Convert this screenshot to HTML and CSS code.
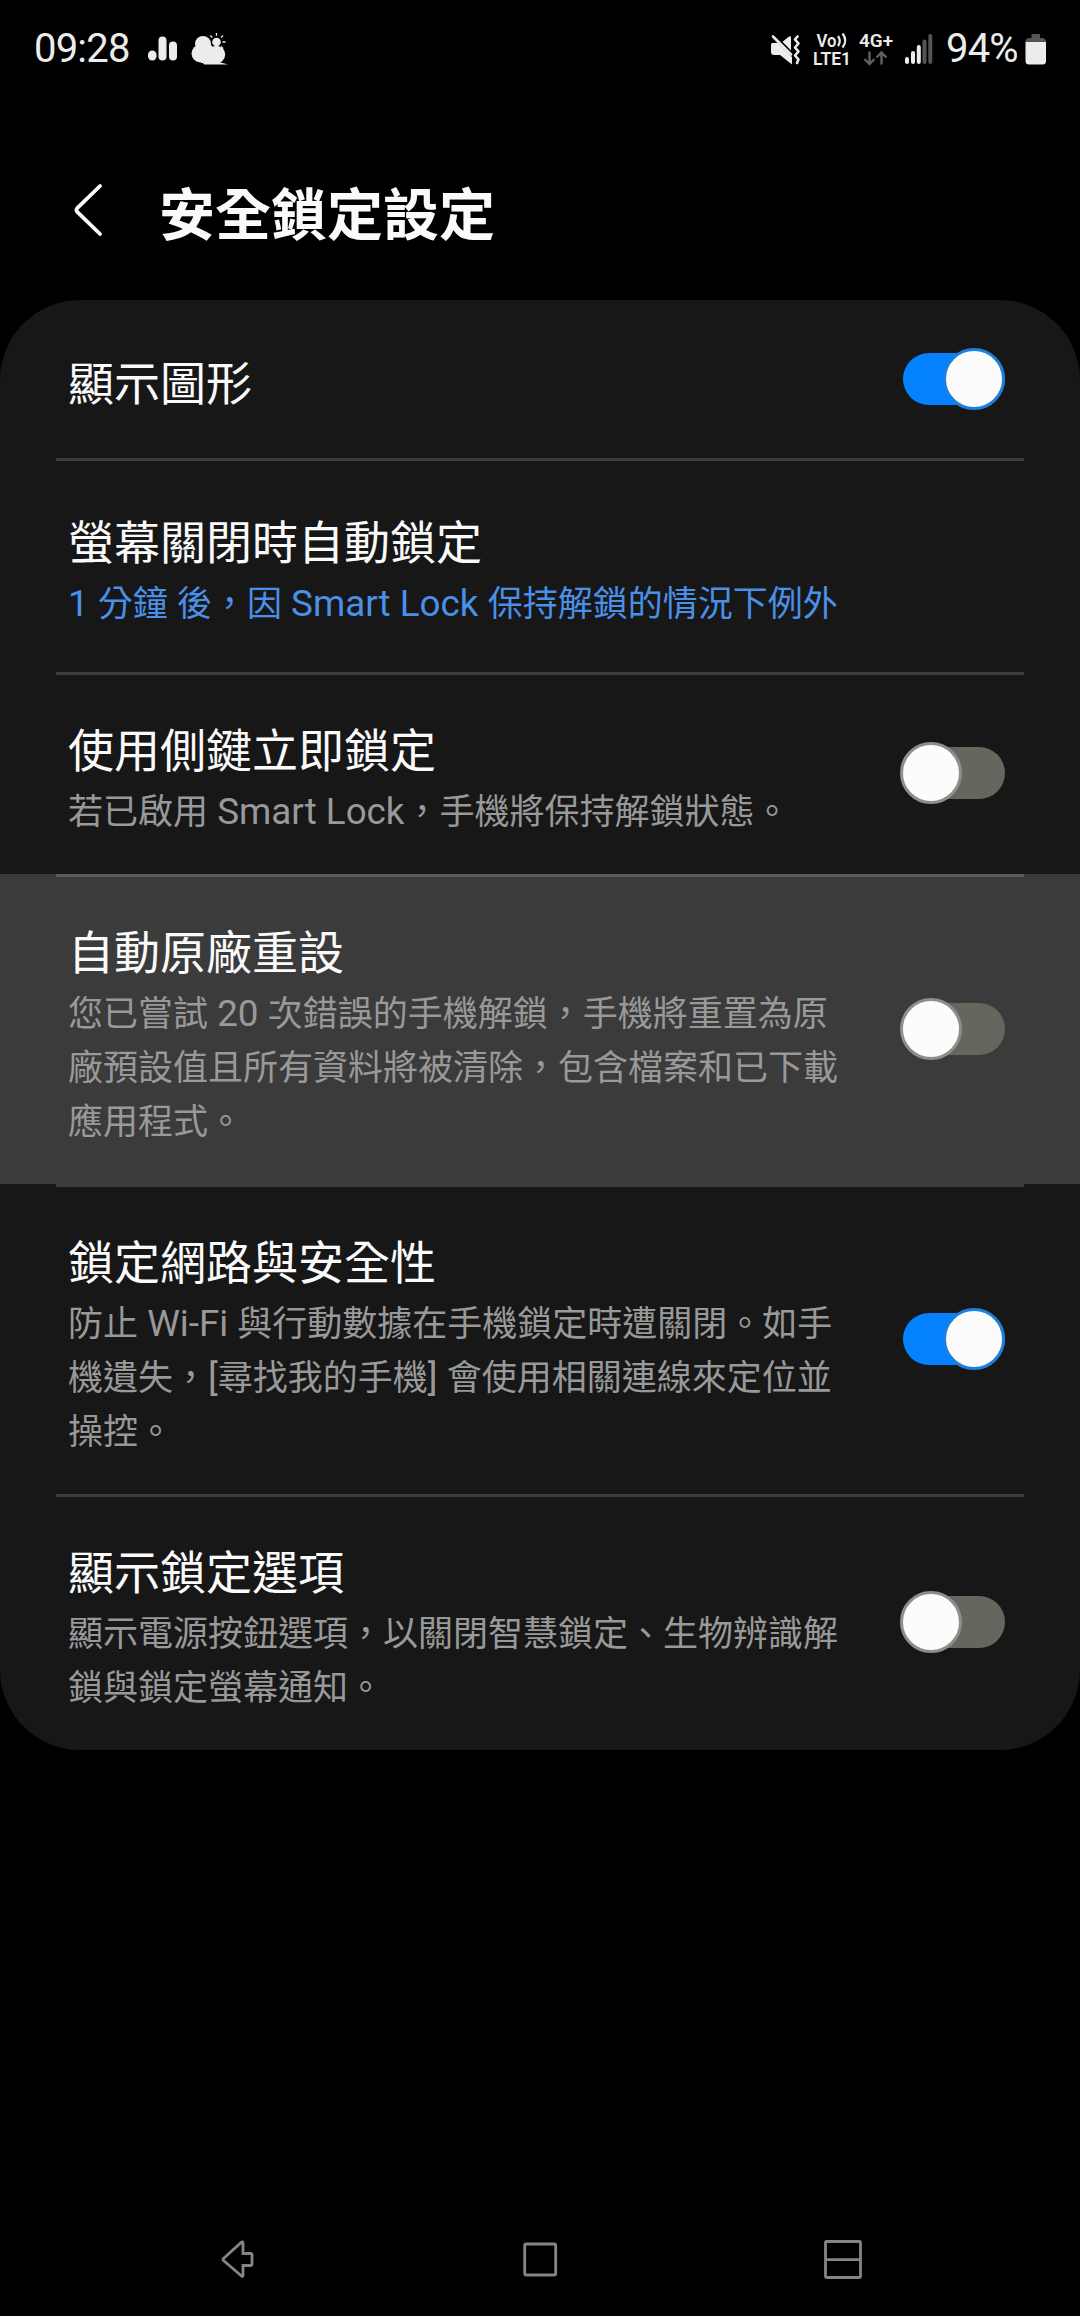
FILE: index.html
```html
<!DOCTYPE html>
<html lang="zh-Hant">
<head>
<meta charset="utf-8">
<title>安全鎖定設定</title>
<link rel="stylesheet" href="styles.css">
</head>
<body>
<header class="status-bar">
  <span class="clock">09:28</span>
  <svg class="icon-stats" width="30" height="26" viewBox="0 0 30 26" fill="#ececec"><rect x="0" y="14.500" width="8.500" height="10" rx="4.200"/><rect x="10.500" y="0.500" width="8" height="24" rx="4"/><rect x="21" y="5.500" width="8" height="19" rx="4"/></svg>
  <svg class="icon-weather" width="38" height="34" viewBox="0 0 38 34" fill="#ececec"><circle cx="12" cy="12" r="8"/><circle cx="9.500" cy="21.500" r="9"/><circle cx="25.500" cy="22.500" r="8.700"/><path d="M8 13h12l8 8-2 10H10z"/><circle cx="25.500" cy="10" r="4.300"/><path d="M11 30h17l9 2.600H13z"/><path d="M25.500 1v2.800M19.300 3.500l2 2M32 3.500l-2 2M31.500 10h3M30 14.500l2 2" stroke="#ececec" stroke-width="1.300"/></svg>
  <svg class="icon-mute" width="32" height="34" viewBox="0 0 32 34" fill="#ececec"><path d="M2 11h6L22 25v7.500L10 23H4q-3 0-3-3v-7q0-2 1-2z"/><path d="M12.500 9.800L19 4.500q2-1 2 1v13z"/><path d="M3 4.500l18 18M27.500 4.500l-2.500 3 3.500 4-3.500 4 3.500 4-3.500 4 3.500 4-1.500 3.500" fill="none" stroke="#ececec" stroke-width="2.600" stroke-linecap="round" stroke-linejoin="round"/></svg>
  <svg class="icon-volte" width="40" height="40" viewBox="0 -3 40 40" fill="#ececec"><text x="3.500" y="15" font-size="18" textLength="20" lengthAdjust="spacingAndGlyphs">Vo</text><text x="0" y="32.500" font-size="18" textLength="38" lengthAdjust="spacingAndGlyphs">LTE1</text><path d="M25 4q3.500 5 0 10M29.500 1.500q5.500 7 0 14" fill="none" stroke="#ececec" stroke-width="2.200"/></svg>
  <svg class="icon-4g" width="36" height="40" viewBox="0 -3 36 40" fill="#ececec"><text x="0" y="15" font-size="18" textLength="34" lengthAdjust="spacingAndGlyphs">4G+</text><path d="M10.500 19.500v12M5.500 27l5 5 5-5M22.500 32.500v-12M17.500 25.500l5-5 5 5" fill="none" stroke="#606060" stroke-width="2.400"/></svg>
  <svg class="icon-signal" width="28" height="32" viewBox="0 0 28 32" fill="#ececec"><rect x="0" y="24" width="4" height="7" rx="2"/><rect x="6" y="18" width="4" height="13" rx="2"/><rect x="11.800" y="12" width="4" height="19" rx="2"/><g fill="#555"><rect x="17.500" y="6.500" width="4" height="24.500" rx="2"/><rect x="23.300" y="1" width="4" height="30" rx="2"/></g></svg>
  <span class="battery-level">94%</span>
  <svg class="icon-battery" width="22" height="32" viewBox="0 0 22 32"><path d="M6.500 1h8.500v4h2q4 0 4 4H.500q0-4 4-4h2z" fill="#555"/><path d="M.500 9H21v19q0 3.500-3.500 3.500H4Q.500 31.500.500 28z" fill="#ececec"/></svg>
</header>

<div class="title-bar">
  <svg class="back" width="30" height="54" viewBox="0 0 30 54" fill="none" stroke="#fafafa" stroke-width="3.800" stroke-linecap="round" stroke-linejoin="round"><path d="M27 3L4.500 24.800q-2 2.200 0 4.400L27 51"/></svg>
  <h1>安全鎖定設定</h1>
</div>

<main class="card">
  <section class="row row-single">
    <div class="text"><h2>顯示圖形</h2></div>
    <span class="toggle on"></span>
  </section>
  <section class="row row-tall">
    <div class="text"><h2>螢幕關閉時自動鎖定</h2><p class="link"><span class="latin">1 </span>分鐘<span class="latin"> </span>後，因<span class="latin"> Smart Lock </span>保持解鎖的情況下例外</p></div>
  </section>
  <section class="row">
    <div class="text"><h2>使用側鍵立即鎖定</h2><p>若已啟用<span class="latin"> Smart Lock</span>，手機將保持解鎖狀態。</p></div>
    <span class="toggle"></span>
  </section>
  <section class="row pressed">
    <div class="text"><h2>自動原廠重設</h2><p>您已嘗試<span class="latin"> 20 </span>次錯誤的手機解鎖，手機將重置為原<br>廠預設值且所有資料將被清除，包含檔案和已下載<br>應用程式。</p></div>
    <span class="toggle"></span>
  </section>
  <section class="row">
    <div class="text"><h2>鎖定網路與安全性</h2><p>防止<span class="latin"> Wi-Fi </span>與行動數據在手機鎖定時遭關閉。如手<br>機遺失，<span class="latin">[</span>尋找我的手機<span class="latin">] </span>會使用相關連線來定位並<br>操控。</p></div>
    <span class="toggle on"></span>
  </section>
  <section class="row">
    <div class="text"><h2>顯示鎖定選項</h2><p>顯示電源按鈕選項，以關閉智慧鎖定、生物辨識解<br>鎖與鎖定螢幕通知。</p></div>
    <span class="toggle"></span>
  </section>
</main>

<nav class="nav-bar">
  <svg width="40" height="42" viewBox="0 0 40 42"><path d="M3.500 19.500L21.500 3.200q1.500-1 1.500 1V14.500h7.500q1.500 0 1.500 1.500v9q0 1.500-1.500 1.500H23V36q0 2-1.500 1L3.500 21.500q-1-1 0-2z"/></svg>
  <svg width="40" height="42" viewBox="0 0 40 42"><rect x="3.700" y="5" width="31" height="31" rx="1.500"/></svg>
  <svg width="42" height="42" viewBox="0 0 42 42"><path d="M4.500 2.500h33q1 0 1 1v34q0 1-1 1h-33q-1 0-1-1v-34q0-1 1-1zM3.500 20.700h35"/></svg>
</nav>
</body>
</html>
```

FILE: styles.css
```css
*, *::before { box-sizing: border-box; margin: 0; padding: 0; }

body {
  width: 1080px;
  height: 2316px;
  display: flex;
  flex-direction: column;
  background: #000;
  color: #fafafa;
  font-family: Roboto, "Noto Sans CJK TC", sans-serif;
  overflow: hidden;
}

svg { display: block; flex: none; }

.status-bar {
  height: 96px;
  padding: 1px 0 0 34px;
  display: flex;
  align-items: center;
  color: #ececec;
  font-size: 40px;
  line-height: 48px;
  white-space: nowrap;
}
.status-bar text { font-family: Roboto, sans-serif; font-weight: 600; }
.clock { width: 114px; padding-top: 1px; letter-spacing: -0.8px; }
.icon-stats { margin-right: 13px; }
.icon-weather { margin-right: 541px; }
.icon-mute { margin-right: 11px; }
.icon-volte { margin-right: 6px; }
.icon-4g { margin-right: 10px; }
.icon-signal { margin-right: 13px; }
.battery-level { width: 79px; padding-top: 1px; letter-spacing: -0.8px; }

.title-bar {
  height: 204px;
  padding-left: 73px;
  display: flex;
  align-items: center;
}
.back { margin: 24px 56px 0 0; }
h1 {
  margin-top: 36px;
  font-size: 56px;
  font-weight: 700;
  line-height: 80px;
}

.card {
  border-radius: 80px;
  overflow: hidden;
  background: #171717;
}
.row {
  --line: #3c3c3c;
  display: flex;
  align-items: center;
  justify-content: space-between;
  padding: 0 75px 0 68px;
  background: linear-gradient(var(--line), var(--line)) 56px 0 / 968px 3px no-repeat;
}
.pressed { --line: #595959; background-color: #3b3b3b; }

.text { padding: 45px 0 34px; white-space: nowrap; }
.row-tall .text { padding: 51px 0 40px; }
.row-single { height: 158px; background: none; }
.row-single .text { padding: 9px 0 0; }

h2 { font-size: 46px; font-weight: 400; line-height: 68px; }
p { margin-top: 1px; font-size: 35px; line-height: 54px; color: #999; }
.latin { font-size: 36.8px; line-height: 1; }
.link { color: #4a90e9; }

.toggle {
  width: 102px;
  height: 52px;
  margin-left: -102px;
  flex: none;
  display: flex;
  align-items: center;
  border-radius: 26px;
  background: #66665f;
}
.toggle::before {
  content: "";
  width: 62px;
  height: 62px;
  flex: none;
  margin-left: -3px;
  border: 3px solid #8e8e8e;
  border-radius: 50%;
  background: #fcfcfc;
}
.toggle.on { background: #0381fe; }
.toggle.on::before { margin-left: 40px; border-color: #1f7fdc; }

.nav-bar {
  margin-top: auto;
  height: 114px;
  padding: 1px 216px 0 220px;
  display: flex;
  align-items: center;
  justify-content: space-between;
}
.nav-bar svg { fill: none; stroke: #858585; stroke-width: 2.8; }
```
